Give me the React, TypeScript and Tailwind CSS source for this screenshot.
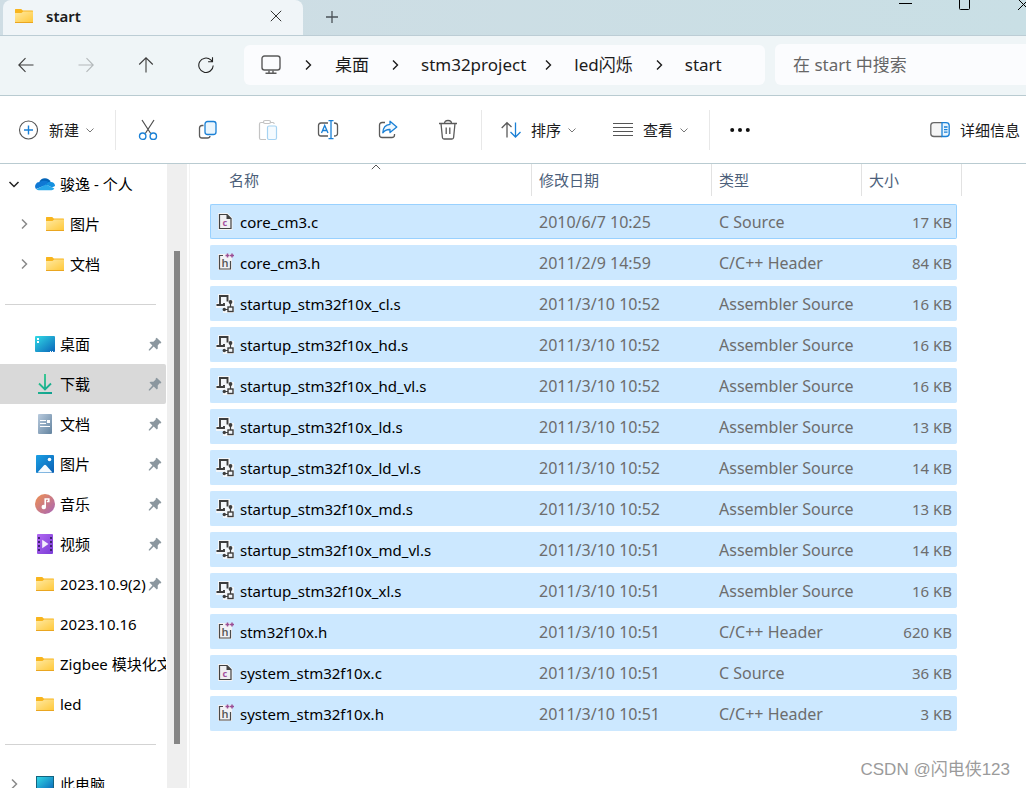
import React from 'react';

type FileKind = 'c' | 'h' | 's';

interface FileItem {
  name: string;
  date: string;
  kind: FileKind;
  size: string;
}

const kindLabels: Record<FileKind, string> = {
  c: 'C Source',
  h: 'C/C++ Header',
  s: 'Assembler Source',
};

const files: FileItem[] = [
  { name: 'core_cm3.c', date: '2010/6/7 10:25', kind: 'c', size: '17 KB' },
  { name: 'core_cm3.h', date: '2011/2/9 14:59', kind: 'h', size: '84 KB' },
  { name: 'startup_stm32f10x_cl.s', date: '2011/3/10 10:52', kind: 's', size: '16 KB' },
  { name: 'startup_stm32f10x_hd.s', date: '2011/3/10 10:52', kind: 's', size: '16 KB' },
  { name: 'startup_stm32f10x_hd_vl.s', date: '2011/3/10 10:52', kind: 's', size: '16 KB' },
  { name: 'startup_stm32f10x_ld.s', date: '2011/3/10 10:52', kind: 's', size: '13 KB' },
  { name: 'startup_stm32f10x_ld_vl.s', date: '2011/3/10 10:52', kind: 's', size: '14 KB' },
  { name: 'startup_stm32f10x_md.s', date: '2011/3/10 10:52', kind: 's', size: '13 KB' },
  { name: 'startup_stm32f10x_md_vl.s', date: '2011/3/10 10:51', kind: 's', size: '14 KB' },
  { name: 'startup_stm32f10x_xl.s', date: '2011/3/10 10:51', kind: 's', size: '16 KB' },
  { name: 'stm32f10x.h', date: '2011/3/10 10:51', kind: 'h', size: '620 KB' },
  { name: 'system_stm32f10x.c', date: '2011/3/10 10:51', kind: 'c', size: '36 KB' },
  { name: 'system_stm32f10x.h', date: '2011/3/10 10:51', kind: 'h', size: '3 KB' },
];

/* ---------- Icons ---------- */

const FolderIcon = () => (
  <svg viewBox="0 0 20 20" className="w-5 h-5 shrink-0">
    <defs>
      <linearGradient id="folder" x1="0" y1="0" x2="1" y2="1">
        <stop offset="0" stopColor="#ffe9a2" />
        <stop offset="1" stopColor="#ffc93c" />
      </linearGradient>
    </defs>
    <path d="M1 3.6c0-.4.2-.6.6-.6h5.6l1.6 1.6H18.4c.4 0 .6.2.6.6V8H1z" fill="#f8b51e" />
    <path d="M1 7h6.4l1.8-1.4H19V16H1z" fill="url(#folder)" />
    <path d="M1 16.5h18" stroke="#eaa620" />
  </svg>
);

const OneDriveIcon = () => (
  <svg viewBox="0 0 20 20" className="w-5 h-5 shrink-0">
    <path d="M4.2 8.2A6.2 6.2 0 0 1 15.6 8L11 13z" fill="#0364b8" />
    <path d="M4.5 8.1A4.3 4.3 0 0 0 1 15l10-4 2-3.4c-2.5-1.4-6-.8-8.5.5z" fill="#0f78d4" />
    <path d="M11 10.6c1-2.4 3-3.2 4.800-2.700A4 4 0 0 1 20 12l-3 1.500z" fill="#1490df" />
    <path d="M1.300 15.300 10.800 10.600 19.400 14.600A3.600 3.600 0 0 1 16.500 16.200H4.300A4 4 0 0 1 1.300 15.300z" fill="#28a8ea" />
  </svg>
);

const DesktopIcon = () => (
  <svg viewBox="0 0 20 20" className="w-5 h-5 shrink-0">
    <defs>
      <linearGradient id="desk" x1="0" y1="0" x2="1" y2="1">
        <stop offset="0" stopColor="#32dbe6" />
        <stop offset="1" stopColor="#0a64b9" />
      </linearGradient>
    </defs>
    <rect x="0" y="2" width="20" height="16" rx="1" fill="url(#desk)" />
    <path d="M2 4h2v2H2zM2 7h2v2H2z" fill="#fff" />
    <path d="M15 17.5h1M17 17.5h1" stroke="#fff" />
  </svg>
);

const PcIcon = () => (
  <svg viewBox="0 0 20 20" className="w-5 h-5 shrink-0">
    <rect x="1.5" y="2.5" width="17" height="14" fill="url(#desk)" stroke="#14637f" />
  </svg>
);

const DownloadIcon = () => (
  <svg viewBox="0 0 20 20" className="w-5 h-5 shrink-0" fill="none" strokeWidth="1.8">
    <defs>
      <linearGradient id="down" gradientUnits="userSpaceOnUse" x1="2" y1="0" x2="18" y2="20">
        <stop offset="0" stopColor="#2fd08a" />
        <stop offset="1" stopColor="#0f9d92" />
      </linearGradient>
    </defs>
    <path d="M10 0v15M4 9.500l6 6 6-6M3 19h14" stroke="url(#down)" />
  </svg>
);

const DocumentIcon = () => (
  <svg viewBox="0 0 20 20" className="w-5 h-5 shrink-0">
    <defs>
      <linearGradient id="doc" x1="0" y1="0" x2="1" y2="1">
        <stop offset="0" stopColor="#b9cbde" />
        <stop offset="1" stopColor="#63839f" />
      </linearGradient>
    </defs>
    <rect x="3" y="0" width="14" height="20" rx="1" fill="url(#doc)" />
    <path d="M5 6.500h6M5 9.500h6M5 12.500h10" stroke="#fff" />
    <rect x="12" y="6" width="3" height="3" fill="#fff" />
  </svg>
);

const PictureIcon = () => (
  <svg viewBox="0 0 20 20" className="w-5 h-5 shrink-0">
    <defs>
      <linearGradient id="pic" x1="0" y1="0" x2="1" y2="1">
        <stop offset="0" stopColor="#1ba0e4" />
        <stop offset="1" stopColor="#0a5fb4" />
      </linearGradient>
    </defs>
    <rect x="1" y="1" width="18" height="18" rx="1" fill="url(#pic)" />
    <path d="M2.500 18.500 9 11.200q1-.9 2 0l6.500 7.300z" fill="#f5fbff" />
    <circle cx="14.5" cy="5.5" r="1.8" fill="#fff" />
  </svg>
);

const MusicIcon = () => (
  <svg viewBox="0 0 20 20" className="w-5 h-5 shrink-0">
    <defs>
      <linearGradient id="music" x1="0" y1="0" x2="1" y2="1">
        <stop offset="0" stopColor="#f0914f" />
        <stop offset="1" stopColor="#a765b8" />
      </linearGradient>
    </defs>
    <circle cx="10" cy="10" r="10" fill="url(#music)" />
    <circle cx="8.8" cy="13" r="2.3" fill="#fff" />
    <path d="M10.200 13V5h3.600v2.500h-2" stroke="#fff" strokeWidth="1.6" fill="none" />
  </svg>
);

const VideoIcon = () => (
  <svg viewBox="0 0 20 20" className="w-5 h-5 shrink-0">
    <defs>
      <linearGradient id="video" x1="0" y1="0" x2="1" y2="1">
        <stop offset="0" stopColor="#b269f2" />
        <stop offset="1" stopColor="#7a3bd6" />
      </linearGradient>
    </defs>
    <rect x="2" y="0" width="16" height="20" rx="1" fill="url(#video)" />
    <path d="M4 3v16M16 3v16" stroke="#3f2370" strokeWidth="2" strokeDasharray="2 2" />
    <path d="M7.200 5.800 13.500 10l-6.300 4.200z" fill="#f3eefc" />
  </svg>
);

const PinIcon = () => (
  <svg viewBox="0 0 14 14" className="w-[14px] h-[14px] shrink-0" fill="#8b979f">
    <path d="M8.700.8 13.400 5.200 12.600 6.400 11.600 6.300 9.700 8.600 9.800 11.400 8.800 12.400 5.700 9.600 1.800 13.400.8 13.400.8 12.600 4.400 8.600 1.500 5.600 2.600 4.700 5.400 4.700 7.700 2.600 7.700 1.600z" />
  </svg>
);

const ChevronIcon = ({ className = '' }: { className?: string }) => (
  <svg viewBox="0 0 12 12" className={`w-3 h-3 shrink-0 ${className}`} fill="none" stroke="currentColor">
    <path d="M4 1.500 8.500 6 4 10.500" />
  </svg>
);

const SmallChevron = () => (
  <svg viewBox="0 0 10 10" className="w-[10px] h-[10px]" fill="none" stroke="#777">
    <path d="M1.500 3.500 5 7l3.500-3.500" />
  </svg>
);

const CSourceIcon = () => (
  <svg viewBox="0 0 20 20" className="w-5 h-5 shrink-0">
    <path d="M3.500 2.500h7.500l4 4v10h-11.500z" fill="#f4f4f6" stroke="#f4f4f6" strokeWidth="3" />
    <path d="M3.500 2.500h7.500l4 4v10h-11.500z" fill="#f0eff2" stroke="#424242" strokeWidth="1.200" />
    <path d="M10.500 2l5 5h-5z" fill="#424242" />
    <text x="6.500" y="14" fontSize="9" fontWeight="700" fill="#a5509f">c</text>
  </svg>
);

const HeaderIcon = () => (
  <svg viewBox="0 0 20 20" className="w-5 h-5 shrink-0">
    <path d="M2 1h14v16H2z" fill="#f2f2f5" />
    <path d="M7 2.500H3.500v13.500h11V8" fill="none" stroke="#4a4a4a" strokeWidth="1.200" />
    <text x="5.500" y="14" fontSize="11" fontWeight="600" fill="#5a5a5a">h</text>
    <path d="M9.500 2.500h4M11.500.500v4M14 2.500h4M16 .500v4" stroke="#9b4f96" strokeWidth="1.500" />
  </svg>
);

const AsmIcon = () => (
  <svg viewBox="0 0 20 20" className="w-5 h-5 shrink-0" fill="none">
    <path d="M2 0h12v6h4v13H7v-5H0V9h2z" fill="#f3f6f9" />
    <path d="M3 2h8.500v5.500M4 2v9M.5 11h7.500V9" stroke="#3d3d3d" strokeWidth="1.900" />
    <path d="M14.500 8.500V13M8 15.500h4" stroke="#3d3d3d" strokeWidth="1.200" />
    <circle cx="14.5" cy="8" r="1.9" fill="#3d3d3d" />
    <circle cx="8.3" cy="15.5" r="1.7" fill="#3d3d3d" />
    <rect x="12" y="13" width="5" height="4.500" stroke="#3d3d3d" strokeWidth="1.400" />
  </svg>
);

const fileIcons: Record<FileKind, React.ReactNode> = {
  c: <CSourceIcon />,
  h: <HeaderIcon />,
  s: <AsmIcon />,
};

/* ---------- Tab strip ---------- */

const TabStrip = () => (
  <header className="flex h-9 bg-linear-to-r from-[#cfdde4] to-[#c9dfe5] border-b border-[#bccdd5] pl-[3px] shrink-0 overflow-hidden">
    <div className="flex items-center w-[300px] pb-[3px] pl-[11px] pr-[17px] bg-[#f0f5f8] rounded-t-lg">
      <FolderIcon />
      <span className="ml-3 flex-1 text-[15px] leading-5 font-semibold text-[#1b1b1b]">start</span>
      <button aria-label="关闭标签页" className="w-5 h-5 flex items-center justify-center">
        <svg viewBox="0 0 12 12" className="w-3 h-3" stroke="#333">
          <path d="M.8.8l10.400 10.400M11.200.8.8 11.200" />
        </svg>
      </button>
    </div>
    <button aria-label="新建标签页" className="w-[58px] h-[34px] flex items-center justify-center">
      <svg viewBox="0 0 12 12" className="w-3 h-3" stroke="#4a5257" strokeWidth="1.3">
        <path d="M0 6h12M6 0v12" />
      </svg>
    </button>
    <div className="ml-auto -mr-1 flex h-3 gap-[46px]">
      <button aria-label="最小化">
        <svg viewBox="0 0 13 12" className="w-[13px] h-3" stroke="#000">
          <path d="M0 3.500h13" />
        </svg>
      </button>
      <button aria-label="最大化">
        <svg viewBox="0 0 13 12" className="w-[13px] h-3" stroke="#000" fill="none">
          <path d="M1.500-2v10.500q0 1 1 1h8q1 0 1-1V-2" />
        </svg>
      </button>
      <button aria-label="关闭">
        <svg viewBox="0 0 13 12" className="w-[13px] h-3" stroke="#000">
          <path d="M1 10 12-1M1-1l11 11" />
        </svg>
      </button>
    </div>
  </header>
);

/* ---------- Address bar ---------- */

const NavBar = () => (
  <div className="flex items-center h-[60px] bg-[#eff5f7] border-b border-[#b9cbd1] pl-[6px] pb-[2px] shrink-0">
    <div className="flex gap-5">
      <button aria-label="后退" className="w-10 h-10 flex items-center justify-center text-[#3d3d3d]">
        <svg viewBox="0 0 16 16" className="w-4 h-4" fill="none" stroke="currentColor" strokeWidth="1.1">
          <path d="M15.500 8H1M7.500 1.200.8 8l6.700 6.800" />
        </svg>
      </button>
      <button aria-label="前进" className="w-10 h-10 flex items-center justify-center text-[#b3b8ba]">
        <svg viewBox="0 0 16 16" className="w-4 h-4" fill="none" stroke="currentColor" strokeWidth="1.1">
          <path d="M.5 8H15M8.500 1.200 15.200 8l-6.700 6.800" />
        </svg>
      </button>
      <button aria-label="上一级" className="w-10 h-10 flex items-center justify-center text-[#3d3d3d]">
        <svg viewBox="0 0 16 16" className="w-4 h-4" fill="none" stroke="currentColor" strokeWidth="1.1">
          <path d="M8 15.500V1M1.200 7.500 8 .8l6.800 6.700" />
        </svg>
      </button>
      <button aria-label="刷新" className="w-10 h-10 flex items-center justify-center text-[#222]">
        <svg viewBox="0 0 16 16" className="w-4 h-4" fill="none" stroke="currentColor" strokeWidth="1.1">
          <path d="M15.200 8.500A7.200 7.200 0 1 1 12.800 2.900L14.500 4.500M14.500.3v4.400h-4.400" />
        </svg>
      </button>
    </div>

    <nav aria-label="地址" className="ml-[18px] flex-1 flex items-center h-10 pl-4 bg-[#fbfcfe] rounded-md text-[17px] leading-6 text-[#1b1b1b] whitespace-nowrap">
      <button aria-label="此电脑">
        <svg viewBox="0 0 22 20" className="w-[22px] h-5" fill="none" stroke="#5a5a5a" strokeWidth="1.4">
          <rect x="2" y="1" width="18" height="14" rx="2.5" />
          <path d="M9 15.500v2.500M13 15.500v2.500M5.500 18.200h11" />
        </svg>
      </button>
      <ChevronIcon className="ml-5 mr-[21px] stroke-[1.4]" />
      <a href="#desktop">桌面</a>
      <ChevronIcon className="mx-5 stroke-[1.4]" />
      <a href="#stm32project">stm32project</a>
      <ChevronIcon className="ml-4 mr-5 stroke-[1.4]" />
      <a href="#led">led闪烁</a>
      <ChevronIcon className="ml-5 mr-5 stroke-[1.4]" />
      <a href="#start">start</a>
    </nav>

    <input
      type="search"
      aria-label="搜索"
      placeholder="在 start 中搜索"
      className="ml-[10px] w-[251px] h-[41px] pl-[18px] bg-[#fbfcfe] rounded-l-md text-[17px] leading-6 text-[#1b1b1b] placeholder:text-[#666] outline-none"
    />
  </div>
);

/* ---------- Toolbar ---------- */

const Divider = () => <div className="w-px h-10 bg-[#e8e8e8] shrink-0" />;

const Toolbar = () => (
  <div className="flex items-center h-[68px] bg-white border-b border-[#b9cbd1] pl-[18px] shrink-0 text-[15px] leading-5 text-[#1b1b1b] whitespace-nowrap">
    <button className="flex items-center h-10 mr-5">
      <svg viewBox="0 0 20 20" className="w-5 h-5" fill="none">
        <circle cx="10.5" cy="10" r="9" stroke="#555" strokeWidth="1.1" />
        <path d="M10.500 5.500v9M6 10h9" stroke="#1a80d6" strokeWidth="1.4" />
      </svg>
      <span className="ml-[11px] mr-[6px]">新建</span>
      <SmallChevron />
    </button>
    <Divider />
    <div className="flex gap-5 ml-3 mr-[13px]">
      <button aria-label="剪切" className="w-10 h-10 flex items-center justify-center">
        <svg viewBox="0 0 20 22" className="w-5 h-[22px]" fill="none" strokeWidth="1.2">
          <path d="M4 1l8.700 13.500M16 1 7.300 14.500" stroke="#4f4f4f" />
          <circle cx="4.7" cy="17.2" r="3.2" stroke="#1a80d6" strokeWidth="1.4" />
          <circle cx="15.3" cy="17.2" r="3.2" stroke="#1a80d6" strokeWidth="1.4" />
        </svg>
      </button>
      <button aria-label="复制" className="w-10 h-10 flex items-center justify-center">
        <svg viewBox="0 0 20 20" className="w-5 h-5" fill="none" strokeWidth="1.3">
          <path d="M5.500 5.500H4q-2.500 0-2.500 2.500v7.500Q1.500 18 4 18h5.500q2.300 0 2.500-2" stroke="#5a5a5a" />
          <rect x="7" y="1.5" width="11" height="13" rx="2.5" stroke="#1a80d6" fill="#e9f5fd" />
        </svg>
      </button>
      <button aria-label="粘贴" disabled className="w-10 h-10 flex items-center justify-center">
        <svg viewBox="0 0 20 22" className="w-5 h-[22px]" fill="none" strokeWidth="1.2">
          <path d="M6 3.500H3Q1.500 3.500 1.500 5v14q0 1.500 1.500 1.500h5M12 3.500h3q1 0 1.200 1.500" stroke="#c4c4c4" />
          <rect x="5.5" y="1.5" width="7" height="3" rx="1.5" stroke="#c4c4c4" />
          <rect x="9.5" y="7" width="9" height="13.5" rx="1.5" stroke="#a6d3f2" fill="#f5fbff" />
        </svg>
      </button>
      <button aria-label="重命名" className="w-10 h-10 flex items-center justify-center">
        <svg viewBox="0 0 22 20" className="w-[22px] h-5" fill="none" strokeWidth="1.3">
          <path d="M11 3H4Q1.500 3 1.500 5.500v8Q1.500 16 4 16h7M17 3q3.500 0 3.500 2.500v8Q20.500 16 17 16" stroke="#5a5a5a" />
          <path d="M14 .7v18M11.500.7h5M11.500 18.700h5" stroke="#1a80d6" />
          <path d="M4.500 13 7.700 5.500 11 13M5.700 10.500h4" stroke="#1a80d6" />
        </svg>
      </button>
      <button aria-label="共享" className="w-10 h-10 flex items-center justify-center">
        <svg viewBox="0 0 20 20" className="w-5 h-5" fill="none" strokeWidth="1.3">
          <path d="M7 2.500H4.200Q1.500 2.500 1.500 5v10q0 2.500 2.700 2.500h9.600q2.700 0 2.700-2.500v-1" stroke="#5a5a5a" />
          <path d="M12 1.200 18.800 7 12 12.600V9.500C8.500 9.300 6.500 10.500 4.800 12.800 5 8 7.500 4.700 12 4.300z" stroke="#1a80d6" strokeLinejoin="round" fill="#f0f8fe" />
        </svg>
      </button>
      <button aria-label="删除" className="w-10 h-10 flex items-center justify-center">
        <svg viewBox="0 0 20 22" className="w-5 h-[22px]" fill="none" stroke="#5a5a5a" strokeWidth="1.3">
          <path d="M1 4.500h18M6.500 4.500q0-3 3.500-3t3.500 3M3 4.500l1.400 14q.2 1.500 1.600 1.500h8q1.400 0 1.600-1.500L17 4.500M8.200 8.500v6.500M11.800 8.500v6.500" />
        </svg>
      </button>
    </div>
    <Divider />
    <button className="flex items-center h-10 ml-[19px]">
      <svg viewBox="0 0 20 20" className="w-5 h-5" fill="none" strokeWidth="1.3">
        <path d="M6 17.500V3M.7 8 6 2.700 10.500 7" stroke="#5a5a5a" />
        <path d="M14.500 2.500V17M9.500 12l5 5 5-5" stroke="#1a80d6" />
      </svg>
      <span className="ml-[10px] mr-[6px]">排序</span>
      <SmallChevron />
    </button>
    <button className="flex items-center h-10 ml-9 mr-5">
      <svg viewBox="0 0 20 20" className="w-5 h-5" stroke="#555">
        <path d="M0 3.500h20M0 7.500h20M0 11.500h20M0 15.500h20" />
      </svg>
      <span className="ml-[10px] mr-[6px]">查看</span>
      <SmallChevron />
    </button>
    <Divider />
    <button aria-label="查看更多" className="w-[60px] h-10 flex items-center justify-center">
      <svg viewBox="0 0 20 6" className="w-5 h-[6px]" fill="#111">
        <circle cx="2.2" cy="3" r="2" />
        <circle cx="10" cy="3" r="2" />
        <circle cx="17.8" cy="3" r="2" />
      </svg>
    </button>
    <button className="flex items-center h-10 ml-auto mr-[6px]">
      <svg viewBox="0 0 20 20" className="w-5 h-5" fill="none" strokeWidth="1.3">
        <path d="M12 2.700H4Q.8 2.700.8 5.500v8.200q0 2.800 3.200 2.800h8" stroke="#666" fill="#f5f5f5" />
        <path d="M12 2.700h4q3.200 0 3.200 2.800v8.200q0 2.800-3.200 2.800h-4z" stroke="#1a80d6" fill="#e9f5fd" />
        <path d="M14 7h3.500M14 9.600h3.500M14 12.200h3.500" stroke="#1a80d6" />
      </svg>
      <span className="ml-[10px]">详细信息</span>
    </button>
  </div>
);

/* ---------- Sidebar ---------- */

interface SideItemProps {
  icon: React.ReactNode;
  label: string;
  chevron?: 'open' | 'closed';
  nested?: boolean;
  pinned?: boolean;
  active?: boolean;
}

const SideItem: React.FC<SideItemProps> = ({ icon, label, chevron, nested, pinned, active }) => (
  <li>
    <button
      className={`flex items-center w-full h-10 text-left ${nested ? 'pl-[14px]' : 'pl-1'} ${pinned ? 'pr-1' : ''} ${
        active ? 'bg-[#d9d9d9] rounded-r-xs' : ''
      }`}
    >
      <span className="w-5 mr-[11px] flex justify-center shrink-0">
        {chevron === 'open' && <ChevronIcon className="rotate-90 text-[#222] stroke-[1.5]" />}
        {chevron === 'closed' && <ChevronIcon className="text-[#8a8a8a] stroke-[1.5]" />}
      </span>
      {icon}
      <span className={`ml-[5px] flex-1 overflow-hidden whitespace-nowrap ${pinned ? 'mr-[2px]' : ''}`}>{label}</span>
      {pinned && <PinIcon />}
    </button>
  </li>
);

const SideRule = () => (
  <li className="h-10 flex items-center pl-[5px] pr-[10px]" role="separator">
    <div className="flex-1 h-px bg-[#d3d3d3]" />
  </li>
);

const Sidebar = () => (
  <aside className="flex shrink-0 border-r border-[#f3f3f3] pr-[2px]">
    <ul className="w-[166px] overflow-hidden text-[15px] leading-6 text-black">
      <SideItem icon={<OneDriveIcon />} label="骏逸 - 个人" chevron="open" />
      <SideItem icon={<FolderIcon />} label="图片" chevron="closed" nested />
      <SideItem icon={<FolderIcon />} label="文档" chevron="closed" nested />
      <SideRule />
      <SideItem icon={<DesktopIcon />} label="桌面" pinned />
      <SideItem icon={<DownloadIcon />} label="下载" pinned active />
      <SideItem icon={<DocumentIcon />} label="文档" pinned />
      <SideItem icon={<PictureIcon />} label="图片" pinned />
      <SideItem icon={<MusicIcon />} label="音乐" pinned />
      <SideItem icon={<VideoIcon />} label="视频" pinned />
      <SideItem icon={<FolderIcon />} label="2023.10.9(2)" pinned />
      <SideItem icon={<FolderIcon />} label="2023.10.16" />
      <SideItem icon={<FolderIcon />} label="Zigbee 模块化文" />
      <SideItem icon={<FolderIcon />} label="led" />
      <SideRule />
      <SideItem icon={<PcIcon />} label="此电脑" chevron="closed" />
    </ul>
    {/* scrollbar */}
    <div className="w-5 ml-px bg-[#efefef] flex flex-col items-center pt-[87px] pb-11">
      <div className="w-[6px] flex-1 bg-[#868686]" />
    </div>
  </aside>
);

/* ---------- File list ---------- */

const HeadCell = ({ label, pad = 'pl-[7px]' }: { label: string; pad?: string }) => (
  <div className={`h-8 flex items-center border-r border-[#e2e2e2] ${pad}`}>{label}</div>
);

const FileList = () => (
  <main className="relative flex-1 min-w-0 overflow-hidden pl-5 bg-white">
    <table className="table-fixed w-[752px] -mt-[6px] border-separate border-spacing-x-0 border-spacing-y-[6px] text-[15px] leading-5">
      <colgroup>
        <col className="w-[322px]" />
        <col className="w-[180px]" />
        <col className="w-[150px]" />
        <col className="w-[95px]" />
        <col className="w-[5px]" />
      </colgroup>
      <thead className="text-left text-[#4c607a]">
        <tr className="h-[34px] align-top">
          <th className="relative p-0 font-normal" aria-sort="ascending">
            <HeadCell label="名称" pad="pl-[19px]" />
            <svg viewBox="0 0 10 6" className="absolute top-0 left-[161px] w-[10px] h-[6px]" fill="none" stroke="#555">
              <path d="M.8 5.200 5 1l4.200 4.200" />
            </svg>
          </th>
          <th className="p-0 font-normal"><HeadCell label="修改日期" /></th>
          <th className="p-0 font-normal"><HeadCell label="类型" /></th>
          <th className="p-0 font-normal" colSpan={2}><HeadCell label="大小" /></th>
        </tr>
      </thead>
      <tbody className="text-[#6d6d6d] whitespace-nowrap">
        {files.map((file, i) => {
          const edge = i === 0 ? 'border-[#99d1ff]' : 'border-[#cce8ff]';
          return (
            <tr key={file.name} className="h-[35px]">
              <td className={`p-0 pl-[5px] bg-[#cce8ff] border-y border-l rounded-l-xs ${edge}`}>
                <div className="flex items-center gap-1 text-black">
                  {fileIcons[file.kind]}
                  {file.name}
                </div>
              </td>
              <td className={`p-0 pl-[7px] bg-[#cce8ff] border-y text-[16px] ${edge}`}>{file.date}</td>
              <td className={`p-0 pl-[7px] bg-[#cce8ff] border-y text-[16px] ${edge}`}>{kindLabels[file.kind]}</td>
              <td className={`p-0 pr-1 bg-[#cce8ff] border-y border-r rounded-r-xs text-right ${edge}`}>{file.size}</td>
              <td className="p-0" />
            </tr>
          );
        })}
      </tbody>
    </table>
    <p className="absolute right-4 bottom-1 text-[17px] leading-7 text-[#9b9b9b] font-['Liberation_Sans','Noto_Sans_CJK_SC',sans-serif]">
      CSDN @闪电侠123
    </p>
  </main>
);

export default function App() {
  return (
    <div className="h-screen flex flex-col overflow-hidden bg-white font-['Noto_Sans','Noto_Sans_CJK_SC',sans-serif]">
      <TabStrip />
      <NavBar />
      <Toolbar />
      <div className="flex flex-1 min-h-0">
        <Sidebar />
        <FileList />
      </div>
    </div>
  );
}
